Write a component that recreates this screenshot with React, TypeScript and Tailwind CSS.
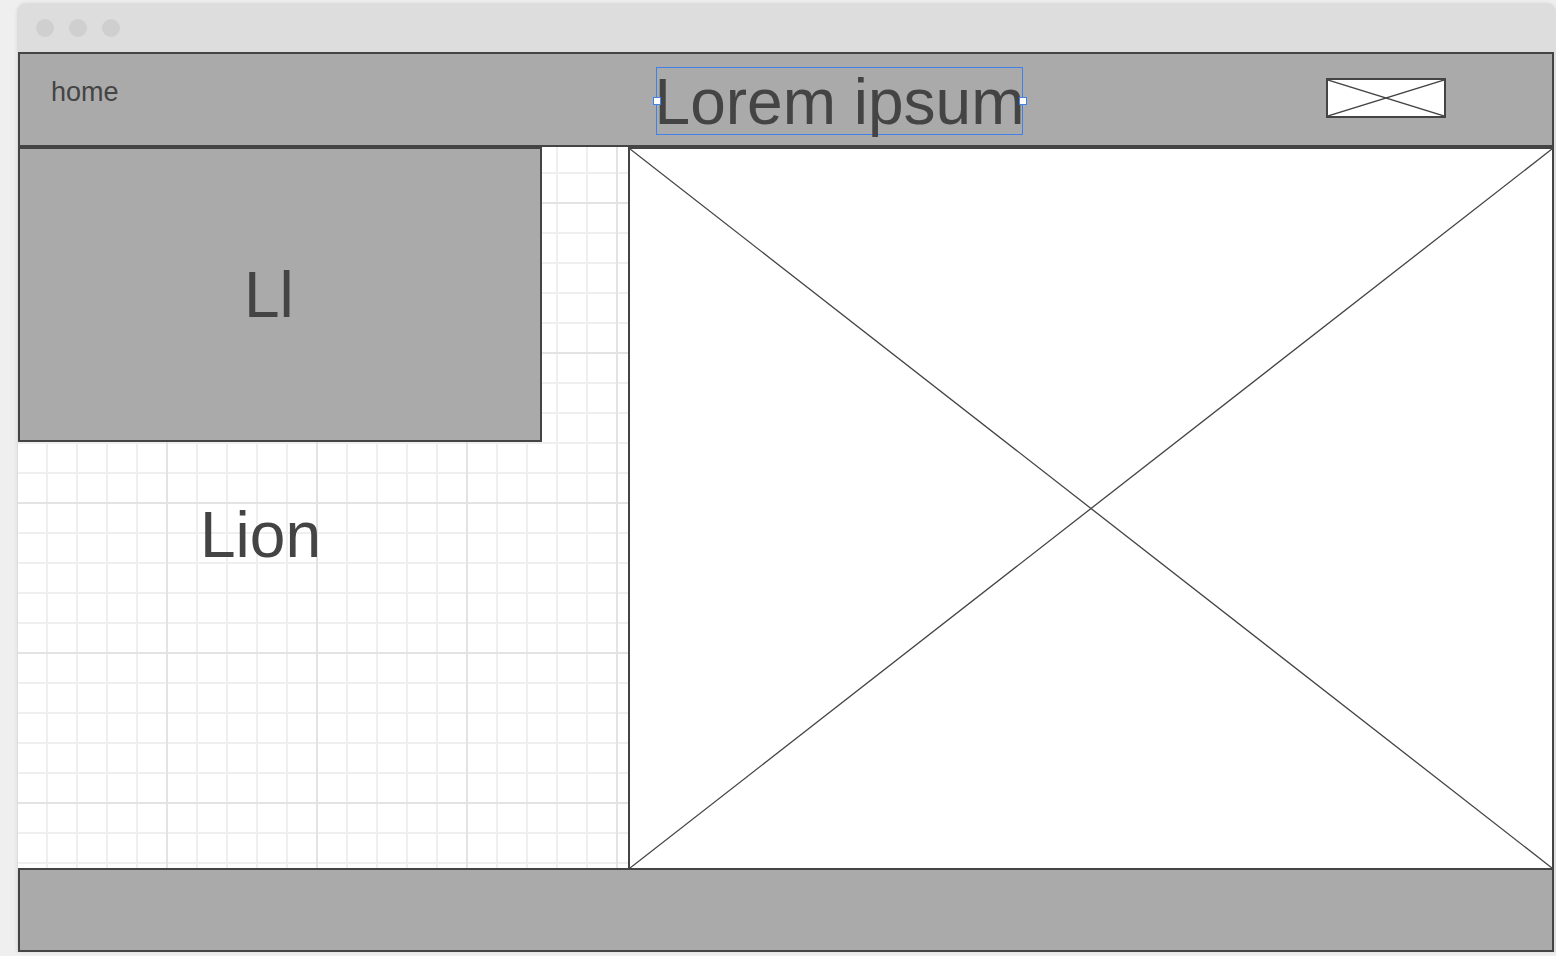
import React from "react";

const font = "font-['Liberation_Sans',Arial,sans-serif]";

// crossed-out placeholder picture
const Cross = () => (
  <svg className="absolute inset-0 h-full w-full" preserveAspectRatio="none" viewBox="0 0 100 100">
    <line x1="0" y1="0" x2="100" y2="100" stroke="#444444" strokeWidth="1.3" vectorEffect="non-scaling-stroke" />
    <line x1="100" y1="0" x2="0" y2="100" stroke="#444444" strokeWidth="1.3" vectorEffect="non-scaling-stroke" />
  </svg>
);

const App = () => {
  return (
    <div className={`w-[1556px] h-[956px] bg-[#efefef] pl-[17px] pt-[3px] overflow-hidden ${font}`}>
      <div className="w-[1539px] flex flex-col rounded-t-[9px] bg-[#dddddd] shadow-[0_0_4px_rgba(0,0,0,0.08)]">
        {/* Title bar */}
        <div className="h-[49px] flex items-center gap-[15px] pl-[19px]">
          <span className="w-[18px] h-[18px] rounded-full bg-[#cfcfcf]" />
          <span className="w-[18px] h-[18px] rounded-full bg-[#cfcfcf]" />
          <span className="w-[18px] h-[18px] rounded-full bg-[#cfcfcf]" />
        </div>

        <div className="ml-[1px] w-[1536px] flex flex-col bg-white">
          {/* Header */}
          <header className="h-[95px] flex border-2 border-[#444444] bg-[#aaaaaa] text-[#444444]">
            <div className="w-[636px] pl-[31px] pt-[25px]">
              <span className="block text-[27px] leading-none">home</span>
            </div>
            <div className="relative mt-[13px] w-[367px] h-[68px] border-[1.5px] border-[#3f80ea] pt-[2px] flex justify-center">
              <span className="whitespace-nowrap text-[64px] leading-none">Lorem ipsum</span>
              <span className="absolute z-10 -left-[4.5px] top-1/2 -translate-y-1/2 w-[8px] h-[8px] bg-white border border-[#3f80ea]" />
              <span className="absolute z-10 -right-[4.5px] top-1/2 -translate-y-1/2 w-[8px] h-[8px] bg-white border border-[#3f80ea]" />
            </div>
            <div className="relative ml-[303px] mt-[24px] w-[120px] h-[40px] border-2 border-[#444444] bg-white">
              <Cross />
            </div>
          </header>

          {/* Main */}
          <div className="h-[721px] flex">
            <div className="w-[610px] flex flex-col bg-white [background-image:linear-gradient(to_right,#e3e3e3_2px,transparent_2px),linear-gradient(to_bottom,#e3e3e3_2px,transparent_2px),linear-gradient(to_right,#efefef_2px,transparent_2px),linear-gradient(to_bottom,#efefef_2px,transparent_2px)] [background-size:150px_150px,150px_150px,30px_30px,30px_30px] [background-position:148px_55px,148px_55px,28px_25px,28px_25px]">
              <div className="w-[524px] h-[295px] border-2 border-[#444444] bg-[#aaaaaa] flex items-center pl-[224px]">
                <span className="text-[64px] leading-none text-[#444444]">Ll</span>
              </div>
              <span className="mt-[61px] ml-[182px] text-[64px] leading-none text-[#444444]">Lion</span>
            </div>
            <div className="relative w-[926px] h-full border-2 border-b-0 border-[#444444] bg-white">
              <Cross />
            </div>
          </div>

          {/* Footer */}
          <footer className="h-[84px] border-2 border-[#444444] bg-[#aaaaaa]" />
        </div>
      </div>
    </div>
  );
};

export default App;
